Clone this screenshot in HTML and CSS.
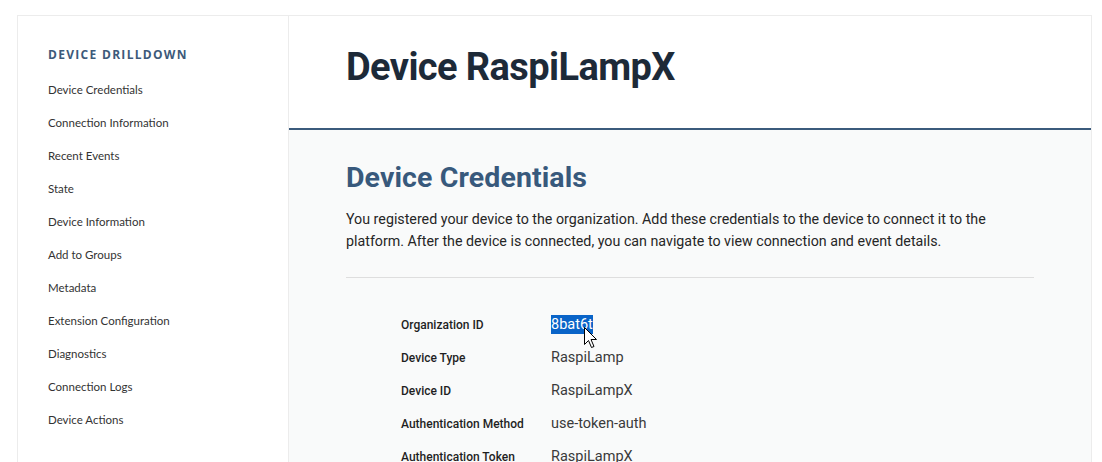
FILE: index.html
```html
<!DOCTYPE html>
<html lang="en">
<head>
<meta charset="utf-8">
<title>Device RaspiLampX</title>
<link rel="stylesheet" href="styles.css">
</head>
<body>
<div class="page">
  <div class="frame">
    <aside class="sidebar">
      <h3 class="side-title">DEVICE DRILLDOWN</h3>
      <ul class="side-nav">
        <li>Device Credentials</li>
        <li>Connection Information</li>
        <li>Recent Events</li>
        <li>State</li>
        <li>Device Information</li>
        <li>Add to Groups</li>
        <li>Metadata</li>
        <li>Extension Configuration</li>
        <li>Diagnostics</li>
        <li>Connection Logs</li>
        <li>Device Actions</li>
      </ul>
    </aside>
    <main class="main">
      <header class="main-header">
        <h1 class="title">Device RaspiLampX</h1>
      </header>
      <section class="content">
        <h2 class="section-title">Device Credentials</h2>
        <p class="intro">You registered your device to the organization. Add these credentials to the device to connect it to the<br>platform. After the device is connected, you can navigate to view connection and event details.</p>
        <hr class="divider">
        <dl class="creds">
          <div class="row"><dt>Organization ID</dt><dd><span class="selected">8bat6t</span><svg class="cursor" width="14" height="22" viewBox="0 0 14 22"><path d="M0.5 0.5 L0.5 17.5 L4.5 13.5 L7.5 20.5 L10 19.5 L7 12.5 L12.5 12.5 Z" fill="#fff" stroke="#000" stroke-width="1" stroke-linejoin="miter"/></svg></dd></div>
          <div class="row"><dt>Device Type</dt><dd>RaspiLamp</dd></div>
          <div class="row"><dt>Device ID</dt><dd>RaspiLampX</dd></div>
          <div class="row"><dt>Authentication Method</dt><dd>use-token-auth</dd></div>
          <div class="row"><dt>Authentication Token</dt><dd>RaspiLampX</dd></div>
        </dl>
      </section>
    </main>
  </div>
</div>
</body>
</html>
```

FILE: styles.css
```css
* { box-sizing: border-box; }
html, body { margin: 0; padding: 0; height: 100%; overflow: hidden; background: #fff; }
body { font-family: "Roboto", "Open Sans", sans-serif; color: #333; }

.page { padding: 15px 10px 0 17px; }

.frame {
  display: flex;
  width: 1075px;
  border: 1px solid #ececec;
  border-bottom: none;
  min-height: 460px;
}

.sidebar {
  width: 271px;
  flex: none;
  border-right: 1px solid #ececec;
  padding: 31px 0 0 30px;
  background: #fff;
}
.side-title {
  margin: 0 0 10px;
  font-family: "Open Sans", sans-serif;
  font-size: 12px;
  font-weight: 700;
  letter-spacing: 1.3px;
  color: #3d5a7a;
  line-height: 16px;
}
.side-nav { list-style: none; margin: 0; padding: 0; }
.side-nav li {
  font-family: "Lato", "Open Sans", sans-serif;
  font-size: 11.5px;
  line-height: 33px;
  color: #333;
}

.main { flex: 1; display: flex; flex-direction: column; background: #f9fafa; }
.main-header {
  height: 114px;
  background: #fff;
  border-bottom: 2px solid #3b5b7c;
  padding: 28px 0 0 57px;
}
.title {
  margin: 0;
  font-family: "Roboto", sans-serif;
  font-size: 38px;
  font-weight: 700;
  line-height: 46px;
  letter-spacing: -0.6px;
  color: #1d2a38;
}

.content { padding: 30px 57px 0 57px; }
.section-title {
  margin: 0;
  font-family: "Roboto", sans-serif;
  font-size: 28.5px;
  font-weight: 700;
  line-height: 36px;
  letter-spacing: 0.1px;
  color: #38597c;
}
.intro {
  margin: 12px 0 0;
  font-family: "Roboto", sans-serif;
  font-size: 14.25px;
  line-height: 22px;
  color: #262626;
  white-space: nowrap;
}
.divider {
  margin: 25px 0 0;
  border: none;
  border-top: 1px solid #dedede;
  height: 0;
}

.creds { margin: 30px 0 0 55px; padding: 0; }
.row { display: flex; align-items: center; height: 33px; }
.row dt {
  width: 150px;
  font-family: "Roboto", sans-serif;
  font-size: 12px;
  font-weight: 500;
  color: #1f1f1f;
}
.row dd {
  margin: 0;
  position: relative;
  font-family: "Roboto", sans-serif;
  font-size: 14.5px;
  color: #3a3a3a;
}
.selected { background: #0a64c8; color: #fff; padding: 1px 0; }
.cursor { position: absolute; left: 33px; top: 11px; }
```
